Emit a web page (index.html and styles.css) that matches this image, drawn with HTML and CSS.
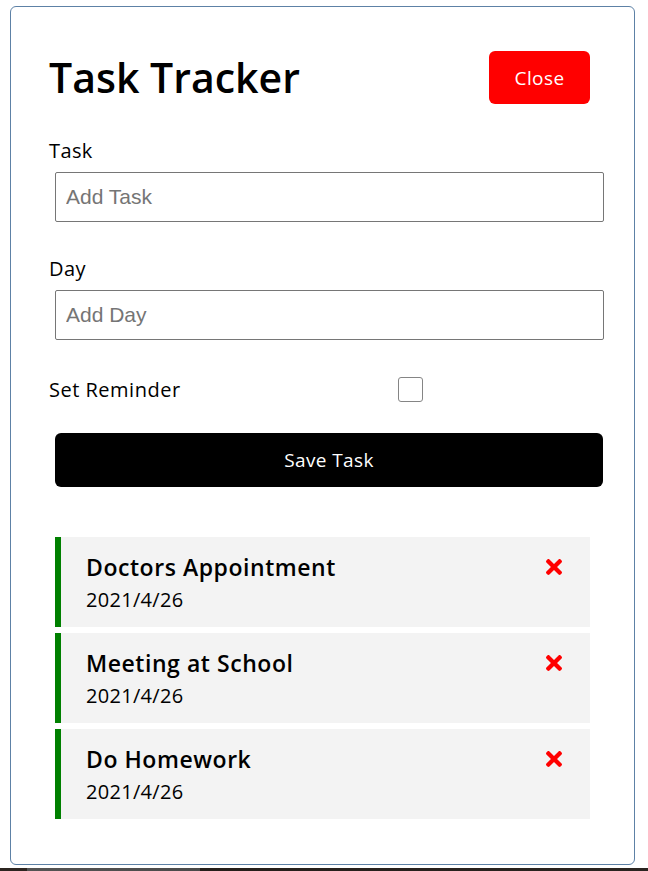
FILE: index.html
```html
<!DOCTYPE html>
<html lang="en">
<head>
<meta charset="utf-8">
<title>Task Tracker</title>
<link rel="stylesheet" href="styles.css">
</head>
<body>
<div class="container">
  <header class="header">
    <h1>Task Tracker</h1>
    <button class="btn btn-close">Close</button>
  </header>
  <form class="add-form">
    <div class="form-control">
      <label>Task</label>
      <input type="text" placeholder="Add Task">
    </div>
    <div class="form-control">
      <label>Day</label>
      <input type="text" placeholder="Add Day">
    </div>
    <div class="form-control-check">
      <label>Set Reminder</label>
      <input type="checkbox">
    </div>
    <button type="button" class="btn btn-block">Save Task</button>
  </form>
  <div class="tasks">
    <div class="task reminder">
      <h3>Doctors Appointment <svg class="del" viewBox="0 80 352 352"><path d="M242.72 256l100.07-100.07c12.28-12.28 12.28-32.19 0-44.48l-22.24-22.240c-12.28-12.28-32.19-12.28-44.48 0L176 189.28 75.93 89.21c-12.28-12.28-32.19-12.28-44.48 0L9.21 111.45c-12.28 12.28-12.28 32.19 0 44.48L109.28 256 9.21 356.07c-12.28 12.28-12.28 32.19 0 44.48l22.24 22.24c12.28 12.28 32.2 12.28 44.48 0L176 322.72l100.07 100.07c12.28 12.28 32.2 12.28 44.48 0l22.24-22.24c12.28-12.28 12.28-32.19 0-44.48L242.72 256z"/></svg></h3>
      <p>2021/4/26</p>
    </div>
    <div class="task reminder">
      <h3>Meeting at School <svg class="del" viewBox="0 80 352 352"><path d="M242.72 256l100.07-100.07c12.28-12.28 12.28-32.19 0-44.48l-22.24-22.240c-12.28-12.28-32.19-12.28-44.48 0L176 189.28 75.93 89.21c-12.28-12.28-32.19-12.28-44.48 0L9.21 111.45c-12.28 12.28-12.28 32.19 0 44.48L109.28 256 9.21 356.07c-12.28 12.28-12.28 32.19 0 44.48l22.24 22.24c12.28 12.28 32.2 12.28 44.48 0L176 322.72l100.07 100.07c12.28 12.28 32.2 12.28 44.48 0l22.24-22.24c12.28-12.28 12.28-32.19 0-44.48L242.72 256z"/></svg></h3>
      <p>2021/4/26</p>
    </div>
    <div class="task reminder">
      <h3>Do Homework <svg class="del" viewBox="0 80 352 352"><path d="M242.72 256l100.07-100.07c12.28-12.28 12.28-32.19 0-44.48l-22.24-22.240c-12.28-12.28-32.19-12.28-44.48 0L176 189.28 75.93 89.21c-12.28-12.28-32.19-12.28-44.48 0L9.21 111.45c-12.28 12.28-12.28 32.19 0 44.48L109.28 256 9.21 356.07c-12.28 12.28-12.28 32.19 0 44.48l22.24 22.24c12.28 12.28 32.2 12.28 44.48 0L176 322.72l100.07 100.07c12.28 12.28 32.2 12.28 44.48 0l22.24-22.24c12.28-12.28 12.28-32.19 0-44.48L242.72 256z"/></svg></h3>
      <p>2021/4/26</p>
    </div>
  </div>
</div>
<div class="taskbar"></div>
</body>
</html>
```
FILE: styles.css
```css
* {
  box-sizing: border-box;
}

body {
  margin: 0;
  background: #fff;
  font-family: "Open Sans", "Noto Sans", sans-serif;
  color: #000;
}

.container {
  width: 625px;
  height: 859px;
  margin: 6px 0 0 10px;
  padding: 0 38px;
  border: 1px solid #5d81a6;
  border-radius: 6px;
  overflow: hidden;
}

.header {
  display: flex;
  justify-content: space-between;
  align-items: center;
  height: 53px;
  margin-top: 44px;
}

.header h1 {
  margin: 0;
  font-size: 41px;
  font-weight: 600;
  line-height: 1;
  letter-spacing: 0;
}

.btn {
  display: block;
  border: none;
  border-radius: 6px;
  background: #000;
  color: #fff;
  font-family: inherit;
  font-size: 19px;
  letter-spacing: 0.4px;
  cursor: pointer;
}

.btn-close {
  width: 101px;
  height: 53px;
  margin-right: 6px;
  background: #ff0000;
}

.form-control {
  margin-top: 32px;
}

.form-control label {
  display: block;
  font-size: 20px;
  line-height: 30px;
  letter-spacing: 0.4px;
}

.form-control input {
  display: block;
  width: 549px;
  height: 50px;
  margin: 6px 0 0 6px;
  padding: 0 10px;
  border: 1px solid #767676;
  border-radius: 2px;
  font-family: "Liberation Sans", Arial, sans-serif;
  font-size: 21px;
  color: #000;
}

.form-control input::placeholder {
  color: #757575;
}

.form-control-check {
  display: flex;
  align-items: center;
  height: 25px;
  margin-top: 37px;
}

.form-control-check label {
  width: 349px;
  font-size: 20px;
  line-height: 30px;
  letter-spacing: 0.5px;
}

.form-control-check input {
  appearance: none;
  -webkit-appearance: none;
  width: 25px;
  height: 25px;
  margin: 0;
  border: 1px solid #858585;
  border-radius: 3px;
  background: #fff;
}

.btn-block {
  width: 548px;
  height: 54px;
  margin: 31px 0 0 6px;
}

.tasks {
  margin-top: 50px;
  display: flex;
  flex-direction: column;
  gap: 6px;
}

.task {
  width: 535px;
  margin-left: 6px;
  padding: 13px 28px 12px 25px;
  background: #f3f3f3;
}

.task.reminder {
  border-left: 6px solid #008000;
}

.task h3 {
  display: flex;
  align-items: center;
  justify-content: space-between;
  margin: 0;
  font-size: 23px;
  font-weight: 600;
  line-height: 35px;
  letter-spacing: 0.55px;
}

.task h3 .del {
  margin-top: -1px;
}

.task p {
  margin: 0;
  font-size: 20px;
  line-height: 30px;
  letter-spacing: 0.3px;
}

.del {
  width: 16px;
  height: 16px;
  fill: #ff0000;
}

.taskbar {
  height: 3px;
  margin-top: 3px;
  background: linear-gradient(to right, #2c2520 0, #2c2520 27px, #545454 27px, #4a4a4a 200px, #241e1a 200px, #2a2420 100%);
}
```
